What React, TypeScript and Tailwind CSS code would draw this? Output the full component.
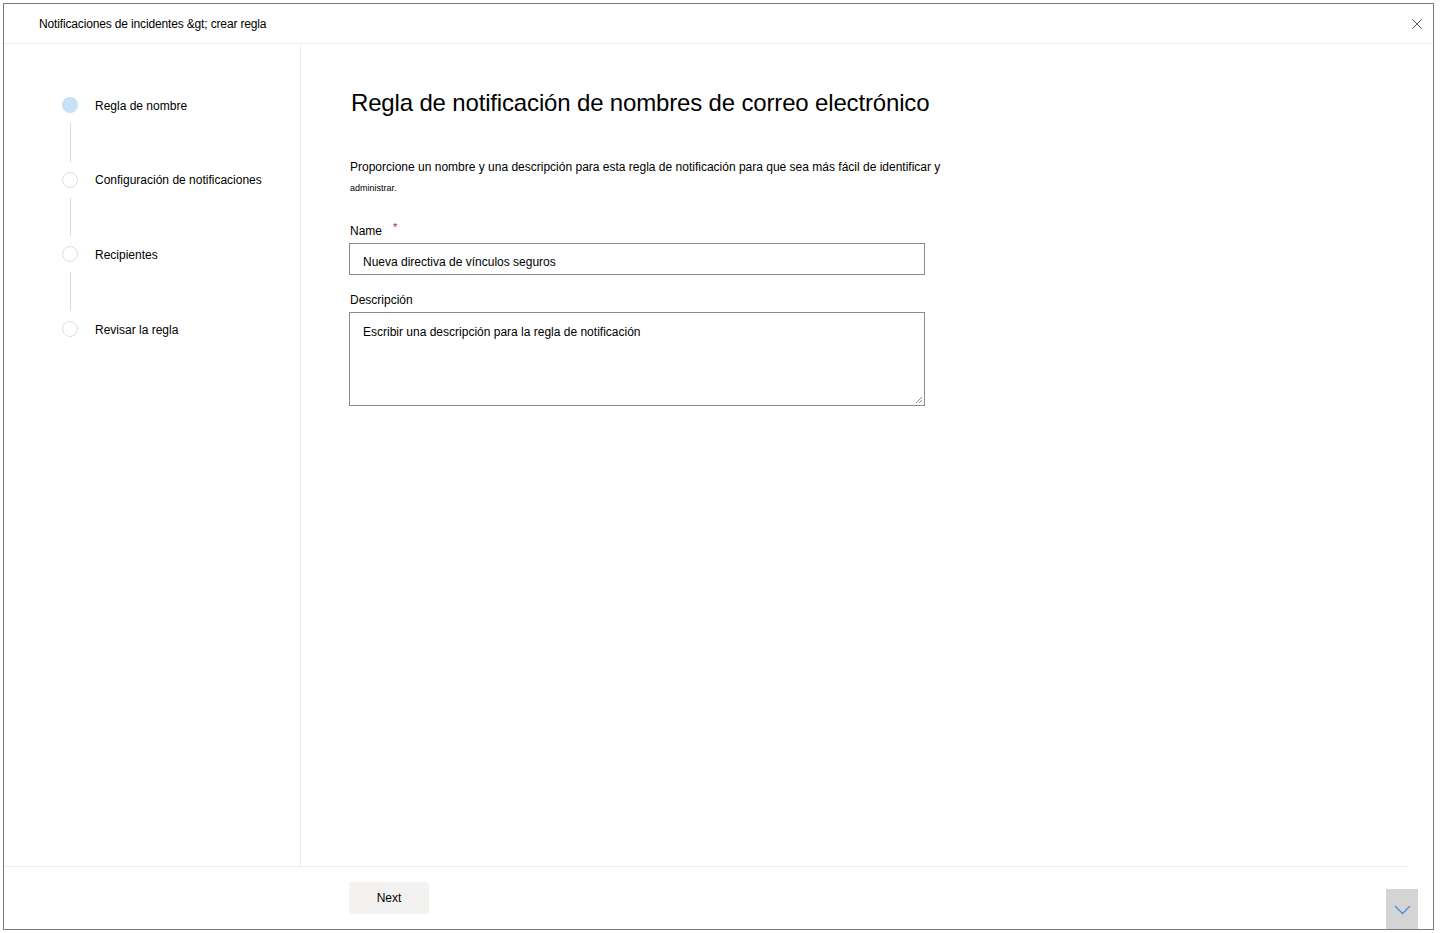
import { X } from 'lucide-react';

const steps = [
  { label: 'Regla de nombre', active: true },
  { label: 'Configuración de notificaciones', active: false },
  { label: 'Recipientes', active: false },
  { label: 'Revisar la regla', active: false },
];

const font = { fontFamily: '"Liberation Sans", Arial, sans-serif' };

export default function App() {
  return (
    <div className="w-[1443px] h-[933px] bg-white p-[3px]" style={font}>
      <div className="w-[1431px] h-[927px] border border-[#7a7a7a] flex flex-col text-[#1b1b1b]">
        {/* header */}
        <div className="h-[40px] flex items-center justify-between border-b border-[#ededed] pl-[35px] pr-[7px]">
          <span className="text-[12px] tracking-[-0.15px] text-black">
            Notificaciones de incidentes &amp;gt; crear regla
          </span>
          <X size={18} strokeWidth={1.2} className="text-[#444]" />
        </div>

        {/* body */}
        <div className="flex flex-1">
          <aside className="w-[297px] border-r border-[#ededed] pl-[58px] pt-[51px]">
            {steps.map((step, i) => (
              <div key={step.label}>
                <div className="flex items-center gap-[17px] h-[20px]">
                  <div
                    className={
                      step.active
                        ? 'w-[16px] h-[16px] rounded-full bg-[#c7e0f4]'
                        : 'w-[16px] h-[16px] rounded-full border border-[#dedede] bg-white'
                    }
                  />
                  <span className="text-[12px] text-black pt-[1px]">{step.label}</span>
                </div>
                {i < steps.length - 1 && (
                  <div className="w-[16px] flex justify-center py-[8px]">
                    <div className="w-px h-[38.7px] bg-[#dcdcdc]" />
                  </div>
                )}
              </div>
            ))}
          </aside>

          <main className="flex-1 pl-[48px] pt-[44px]">
            <h1 className="text-[24px] leading-[30px] tracking-[-0.16px] text-black ml-[2px]">
              Regla de notificación de nombres de correo electrónico
            </h1>
            <p className="mt-[39px] ml-[1px] text-[12px] leading-[20px] text-black w-[620px]">
              Proporcione un nombre y una descripción para esta regla de notificación para que sea más fácil de identificar y{' '}
              <span className="text-[9px]">administrar.</span>
            </p>

            <div className="mt-[24px] ml-[1px] flex items-start gap-[11px]">
              <span className="text-[12px] text-black">Name</span>
              <span className="text-[11px] leading-[10px] text-[#a4262c]">*</span>
            </div>
            <div className="mt-[3px] w-[576px] h-[32px] border border-[#8a8a8a] flex items-center pl-[13px] pt-[5px]">
              <span className="text-[12px] text-black">Nueva directiva de vínculos seguros</span>
            </div>

            <div className="mt-[16px] ml-[1px] text-[12px] text-black">Descripción</div>
            <div className="mt-[3px] w-[576px] h-[94px] border border-[#8a8a8a] pl-[13px] pt-[6px] relative">
              <span className="text-[12px] text-black">
                Escribir una descripción para la regla de notificación
              </span>
              <svg className="absolute right-[1px] bottom-[1px]" width="9" height="9" viewBox="0 0 9 9">
                <path d="M8 2 L2 8 M8 5 L5 8" stroke="#888" strokeWidth="1" />
              </svg>
            </div>
          </main>
        </div>

        {/* footer */}
        <div className="h-[63px] relative">
          <div className="h-full border-t border-[#ededed] mr-[25px] flex items-center pl-[345px]">
            <button className="w-[80px] h-[32px] bg-[#f3f2f1] rounded-[2px] text-[12px] text-black">
              Next
            </button>
          </div>
          <div className="absolute right-[15px] bottom-0 w-[32px] h-[40px] bg-[#d4d4d4] flex items-center justify-center pt-[1px]">
            <svg width="17" height="10" viewBox="0 0 17 10">
              <path d="M1 1 L8.5 8.5 L16 1" fill="none" stroke="#4a8fe0" strokeWidth="1.3" />
            </svg>
          </div>
        </div>
      </div>
    </div>
  );
}
